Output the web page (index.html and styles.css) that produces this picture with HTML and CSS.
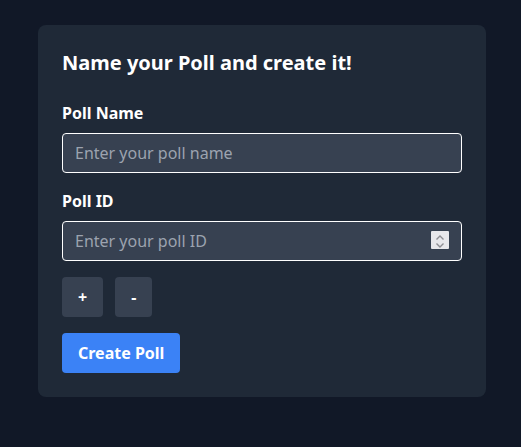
FILE: index.html
```html
<!DOCTYPE html>
<html lang="en">
<head>
<meta charset="utf-8">
<title>Create Poll</title>
<link rel="stylesheet" href="styles.css">
</head>
<body>
<div class="card">
  <h2 class="title">Name your Poll and create it!</h2>
  <div class="field">
    <label class="label" for="name">Poll Name</label>
    <input class="input" id="name" type="text" placeholder="Enter your poll name">
  </div>
  <div class="field">
    <label class="label" for="pid">Poll ID</label>
    <div class="num-wrap">
      <input class="input num" id="pid" type="number" placeholder="Enter your poll ID">
      <span class="spinner" aria-hidden="true">
        <svg width="18" height="18" viewBox="0 0 18 18"><polyline points="5.5,8.5 9,5 12.5,8.5" fill="none" stroke="#8e8e93" stroke-width="1.4"/><polyline points="5.5,12.5 9,16 12.5,12.5" fill="none" stroke="#8e8e93" stroke-width="1.4"/></svg>
      </span>
    </div>
  </div>
  <div class="actions">
    <button class="btn">+</button>
    <button class="btn">-</button>
  </div>
  <button class="btn primary">Create Poll</button>
</div>
</body>
</html>
```
FILE: styles.css
```css
html, body {
  margin: 0;
  padding: 0;
  background: #111827;
  font-family: "Noto Sans", "Open Sans", sans-serif;
  color: #fff;
}
body {
  padding-top: 25px;
  padding-left: 38px;
  min-height: 447px;
  box-sizing: border-box;
}
.card {
  width: 448px;
  box-sizing: border-box;
  background: #1f2937;
  border-radius: 8px;
  padding: 24px;
}
.title {
  margin: 0 0 24px;
  font-size: 20px;
  line-height: 28px;
  font-weight: 700;
}
.field {
  margin-bottom: 16px;
}
.label {
  display: block;
  font-size: 16px;
  line-height: 24px;
  font-weight: 700;
  margin-bottom: 8px;
}
.input {
  display: block;
  width: 100%;
  box-sizing: border-box;
  height: 40px;
  padding: 8px 12px;
  background: #374151;
  border: 1px solid #fff;
  border-radius: 4px;
  color: #fff;
  font-family: inherit;
  font-size: 16px;
  line-height: 24px;
  outline: none;
}
.input::placeholder {
  color: #9ca3af;
}
.num {
  -moz-appearance: textfield;
}
.num::-webkit-inner-spin-button,
.num::-webkit-outer-spin-button {
  -webkit-appearance: none;
  margin: 0;
}
.num-wrap {
  position: relative;
}
.spinner {
  position: absolute;
  right: 13px;
  top: 10px;
  width: 18px;
  height: 18px;
  background: #e8e8ec;
  border-radius: 1px;
  display: flex;
}
.actions {
  display: flex;
  gap: 12px;
  margin-bottom: 16px;
}
.btn {
  height: 40px;
  padding: 8px 16px;
  background: #374151;
  border: none;
  border-radius: 4px;
  color: #fff;
  font-family: inherit;
  font-size: 16px;
  line-height: 24px;
  font-weight: 700;
}
.primary {
  background: #3b82f6;
}
```
